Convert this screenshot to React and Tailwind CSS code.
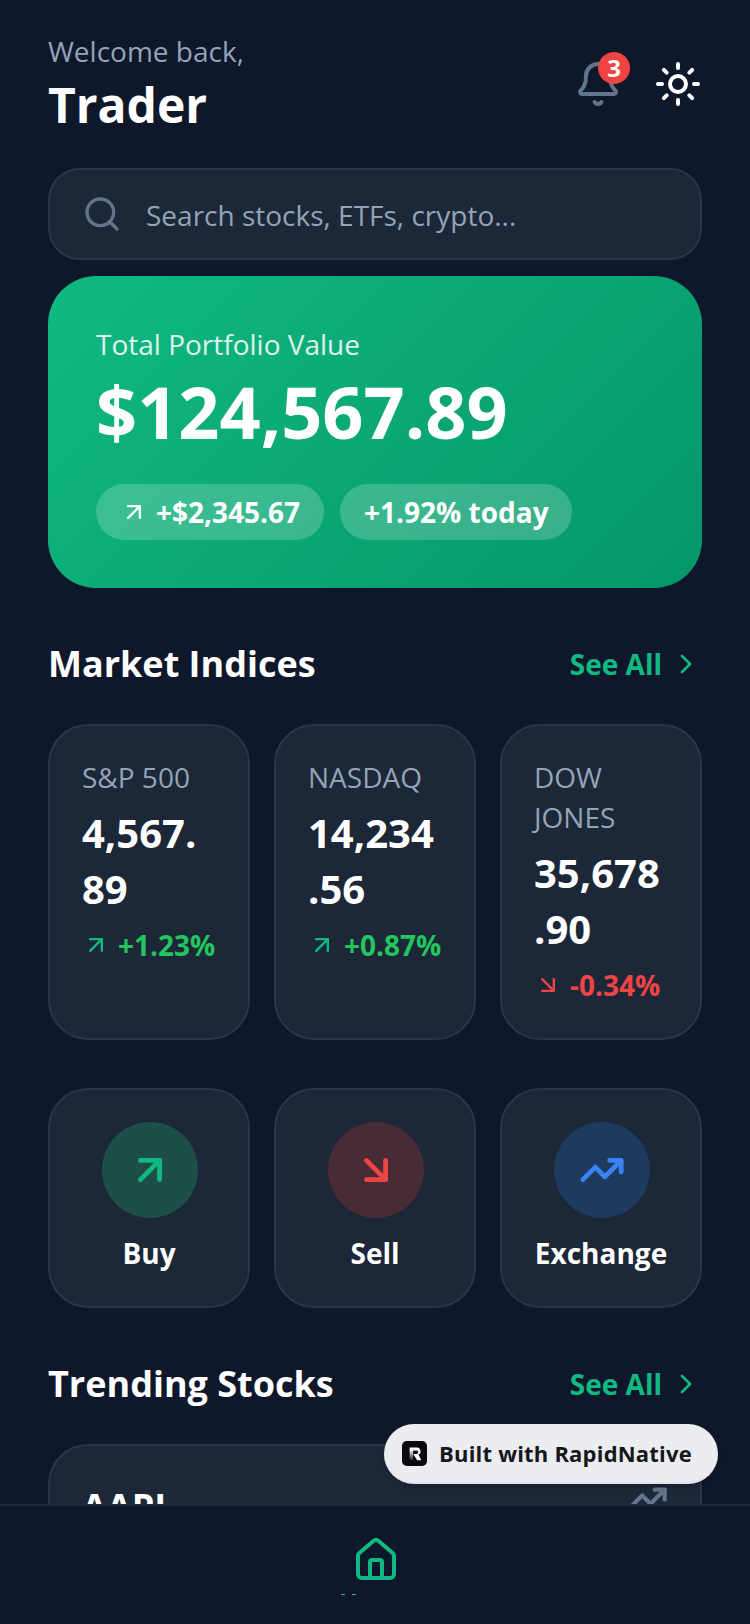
import React from 'react';
import { ArrowDownRight, ArrowUpRight, Bell, ChevronRight, House, Search, Sun, TrendingUp } from 'lucide-react';

const indices = [
  { name: 'S&P 500', value: '4,567.89', change: '+1.23%', up: true },
  { name: 'NASDAQ', value: '14,234.56', change: '+0.87%', up: true },
  { name: 'DOW JONES', value: '35,678.90', change: '-0.34%', up: false },
];

const actions = [
  { label: 'Buy', Icon: ArrowUpRight, circle: 'bg-[#1c4f47]', color: 'text-[#10b981]' },
  { label: 'Sell', Icon: ArrowDownRight, circle: 'bg-[#472c36]', color: 'text-[#ef4444]' },
  { label: 'Exchange', Icon: TrendingUp, circle: 'bg-[#1e3a5f]', color: 'text-[#3b82f6]' },
];

const SectionHeader = ({ title }) => (
  <div className="flex items-center justify-between">
    <h2 className="text-[36px] leading-[48px] font-bold text-white">{title}</h2>
    <div className="flex items-center gap-2 text-[#10b981]">
      <span className="text-[28px] leading-[40px] font-bold">See All</span>
      <ChevronRight size={32} strokeWidth={2} />
    </div>
  </div>
);

const App = () => {
  return (
    <div className="relative flex h-[1624px] w-[750px] flex-col overflow-hidden bg-[#0f172a] font-['Open_Sans',sans-serif]">
      <div className="flex-1 overflow-hidden px-12">
        {/* Header */}
        <div className="flex items-center justify-between pt-[31px]">
          <div>
            <p className="text-[28px] leading-[40px] text-[#94a3b8]">Welcome back,</p>
            <h1 className="mt-[2px] text-[48px] leading-[64px] font-bold text-white">Trader</h1>
          </div>
          <div className="flex items-center gap-[32px]">
            <div className="relative">
              <Bell size={48} strokeWidth={2} className="text-[#64748b]" />
              <span className="absolute -top-[8px] -right-[8px] flex h-8 w-8 items-center justify-center rounded-full bg-[#ef4444] text-[24px] font-bold text-white">3</span>
            </div>
            <Sun size={48} strokeWidth={2} className="text-white" />
          </div>
        </div>

        {/* Search */}
        <div className="mt-[31px] flex h-[92px] items-center gap-[24px] rounded-[32px] border-2 border-[#2a3547] bg-[#1c2738] px-[32px]">
          <Search size={40} strokeWidth={2} className="text-[#64748b]" />
          <span className="pt-[2px] text-[28px] text-[#94a3b8]">Search stocks, ETFs, crypto...</span>
        </div>

        {/* Portfolio card */}
        <div className="mt-[16px] h-[312px] rounded-[48px] bg-[linear-gradient(135deg,#10b981,#059669)] p-[48px]">
          <p className="text-[28px] leading-[40px] text-white/85">Total Portfolio Value</p>
          <p className="mt-[3px] text-[72px] leading-[88px] font-bold text-white">$124,567.89</p>
          <div className="mt-[29px] flex gap-[16px]">
            <div className="flex h-[56px] items-center gap-[8px] rounded-full bg-white/20 px-[24px]">
              <ArrowUpRight size={28} className="text-white" />
              <span className="text-[28px] font-bold text-white">+$2,345.67</span>
            </div>
            <div className="flex h-[56px] items-center rounded-full bg-white/20 pr-[23px] pl-[24px]">
              <span className="text-[28px] font-bold text-white">+1.92% today</span>
            </div>
          </div>
        </div>

        {/* Market indices */}
        <div className="mt-[52px]">
          <SectionHeader title="Market Indices" />
        </div>
        <div className="mt-[36px] flex gap-6">
          {indices.map((item) => (
            <div key={item.name} className="h-[316px] flex-1 rounded-[40px] border-2 border-[#2a3547] bg-[#1c2738] px-[32px] pt-[31px]">
              <p className="text-[28px] leading-[40px] text-[#94a3b8]">{item.name}</p>
              <p className="mt-[8px] text-[40px] leading-[56px] font-bold [line-break:anywhere] text-white">{item.value}</p>
              <div className="mt-[8px] flex items-center gap-[8px]">
                {item.up ? (
                  <ArrowUpRight size={28} className="text-[#10b981]" />
                ) : (
                  <ArrowDownRight size={28} className="text-[#ef4444]" />
                )}
                <span className={`text-[28px] leading-[40px] font-bold ${item.up ? 'text-[#22c55e]' : 'text-[#ef4444]'}`}>{item.change}</span>
              </div>
            </div>
          ))}
        </div>

        {/* Quick actions */}
        <div className="mt-[48px] flex gap-6">
          {actions.map(({ label, Icon, circle, color }) => (
            <div key={label} className="flex h-[220px] flex-1 flex-col items-center rounded-[40px] border-2 border-[#2a3547] bg-[#1c2738] pt-[32px]">
              <div className={`ml-[2px] flex h-[96px] w-[96px] items-center justify-center rounded-full ${circle}`}>
                <Icon size={46} strokeWidth={2.5} className={color} />
              </div>
              <span className="mt-[15px] text-[28px] leading-[40px] font-bold text-white">{label}</span>
            </div>
          ))}
        </div>

        {/* Trending */}
        <div className="mt-[52px]">
          <SectionHeader title="Trending Stocks" />
        </div>
        <div className="mt-[36px] flex items-start justify-between rounded-[40px] border-2 border-[#2a3547] bg-[#1c2738] p-[32px]">
          <span className="mt-[5px] text-[36px] leading-[48px] font-bold text-white">AAPL</span>
          <TrendingUp size={40} strokeWidth={2.5} className="text-[#64748b]" />
        </div>
      </div>

      {/* Tab bar */}
      <div className="relative z-10 flex h-[120px] shrink-0 flex-col items-center border-t-2 border-[#1e293b] bg-[#0f172a] pt-[30px]">
        <House size={48} strokeWidth={2} className="translate-x-[1px] text-[#10b981]" />
        <span className="mt-[10px] mr-[53px] flex w-[16px] gap-[7px]">
          <span className="h-[1px] w-[4px] bg-[#14b8a6]" />
          <span className="h-[1px] w-[4px] bg-[#14b8a6]" />
        </span>
      </div>

      {/* Badge */}
      <div className="absolute top-[1424px] left-[384px] z-20 flex h-[60px] w-[334px] items-center gap-[12px] rounded-full border-b-2 border-[#dfe3ea] bg-[#ecedf0] pl-[18px] shadow-md">
        <svg width="25" height="25" viewBox="0 0 26 26">
          <defs>
            <linearGradient id="stem" x1="0" y1="0" x2="0" y2="1">
              <stop offset="0" stopColor="#fff" />
              <stop offset="1" stopColor="#222" />
            </linearGradient>
          </defs>
          <rect width="26" height="26" rx="5" fill="#0b0b0d" />
          <rect x="8" y="9" width="3.6" height="11" fill="url(#stem)" />
          <path d="M8 6.8h7.6a3.8 3.8 0 0 1 1.6 7.2L20 20h-4.2l-4-6.5h3.3a1.4 1.4 0 0 0 0-3.7H8z" fill="#fff" />
        </svg>
        <span className="text-[22px] font-bold tracking-[0.2px] text-[#16171a]">Built with RapidNative</span>
      </div>
    </div>
  );
};

export default App;
